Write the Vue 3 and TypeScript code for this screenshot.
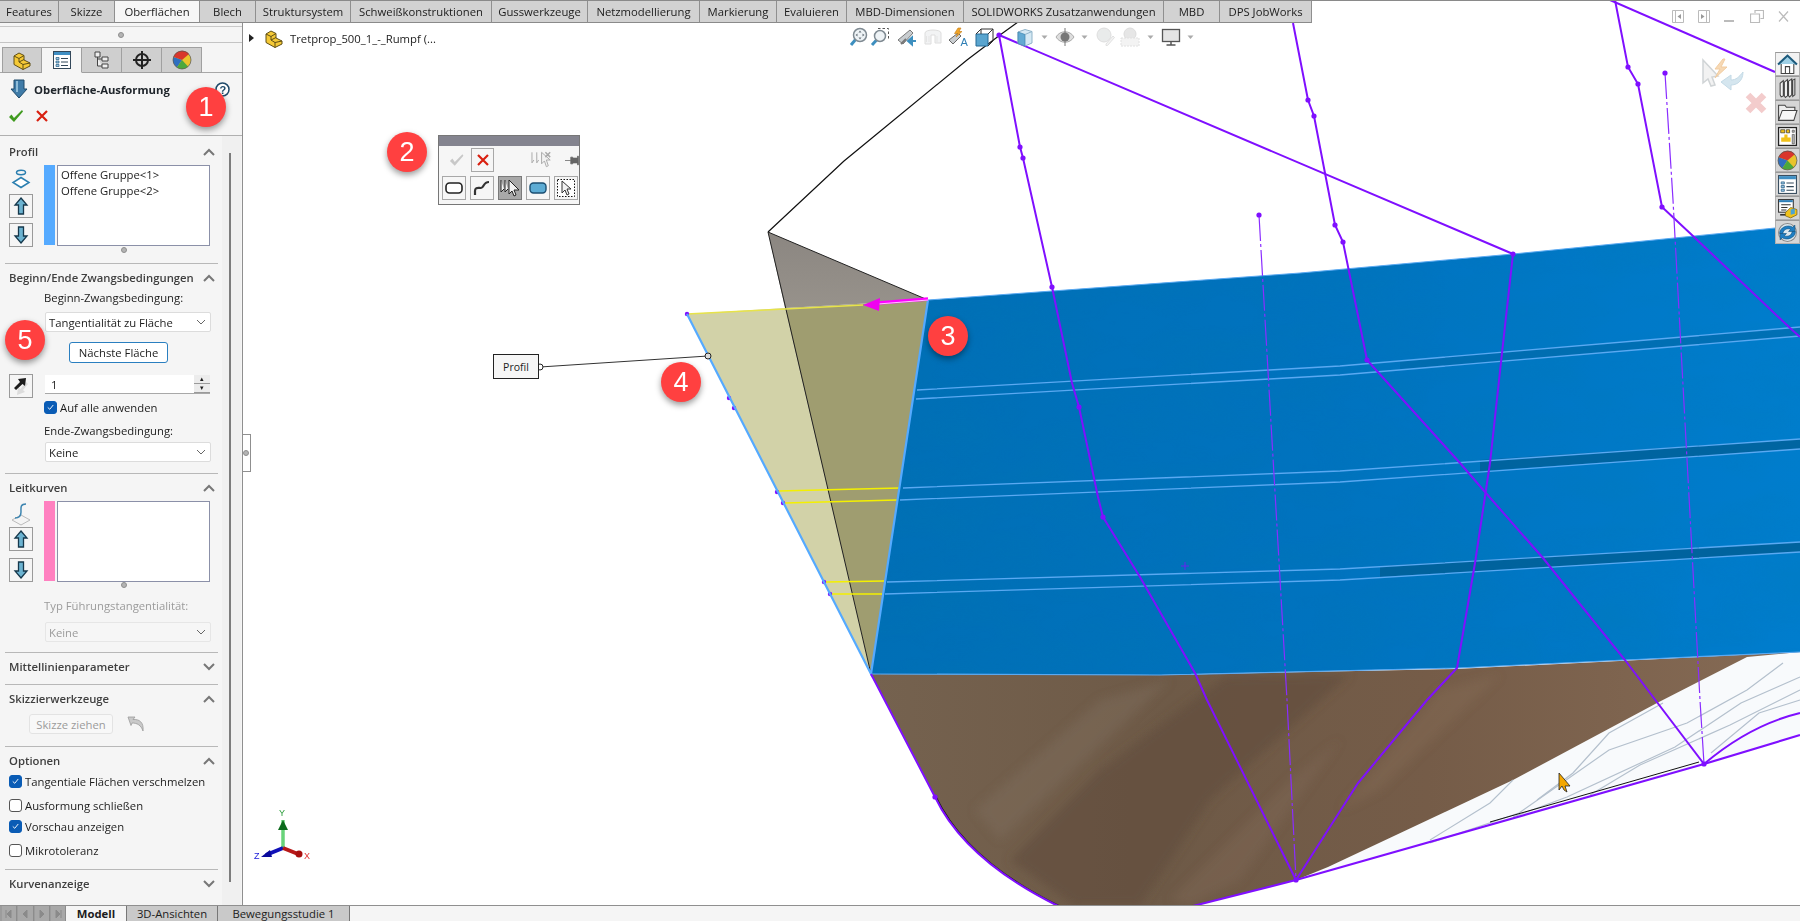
<script setup lang="ts">
interface RibbonTab {
  label: string
  width: number
  active?: boolean
}

// ribbon widths read off the screenshot
const ribbonTabs: RibbonTab[] = [
  { label: 'Features', width: 59 },
  { label: 'Skizze', width: 56 },
  { label: 'Oberflächen', width: 85, active: true },
  { label: 'Blech', width: 56 },
  { label: 'Struktursystem', width: 95 },
  { label: 'Schweißkonstruktionen', width: 141 },
  { label: 'Gusswerkzeuge', width: 96 },
  { label: 'Netzmodellierung', width: 112 },
  { label: 'Markierung', width: 77 },
  { label: 'Evaluieren', width: 70 },
  { label: 'MBD-Dimensionen', width: 117 },
  { label: 'SOLIDWORKS Zusatzanwendungen', width: 200 },
  { label: 'MBD', width: 56 },
  { label: 'DPS JobWorks', width: 92 },
]

const panelTabs = ['i-part', 'i-list', 'i-tree', 'i-cross', 'i-ball']

const markers = [
  { n: 1, x: 206, y: 107 },
  { n: 2, x: 407, y: 152 },
  { n: 3, x: 948, y: 336 },
  { n: 4, x: 681, y: 382 },
  { n: 5, x: 25, y: 340 },
]

// heads-up toolbar: icon centres in page px, turned into margins
const hudRaw = [
  { id: 'h-zoomfit', x: 858, w: 20 },
  { id: 'h-zoomarea', x: 880, w: 20 },
  { id: 'h-prev', x: 907, w: 20 },
  { id: 'h-sect', x: 933, w: 20 },
  { id: 'h-dyn', x: 958, w: 20 },
  { id: 'h-cube', x: 985, w: 20 },
  { id: 'h-shade', x: 1025, w: 20 },
  { id: 'h-drop', x: 1044, w: 7 },
  { id: 'h-eye', x: 1065, w: 20 },
  { id: 'h-drop', x: 1084, w: 7 },
  { id: 'h-ballpale', x: 1105, w: 20 },
  { id: 'h-scene', x: 1130, w: 20 },
  { id: 'h-drop', x: 1150, w: 7 },
  { id: 'h-monitor', x: 1171, w: 20 },
  { id: 'h-drop', x: 1190, w: 7 },
]
const hudItems = hudRaw.map((item, i) => {
  const prev = hudRaw[i - 1]
  const gap = prev ? item.x - item.w / 2 - (prev.x + prev.w / 2) : 0
  return { ...item, gap }
})

const taskPane = ['t-home', 't-books', 't-folder', 't-plan', 'i-ball', 'i-list', 't-view', 't-sync']

const navButtons = [
  'M7 2v8L3 6zM2 2v8',
  'M7 2v8L3 6z',
  'M3 2v8l4-4z',
  'M3 2v8l4-4zM8 2v8',
]

const bottomTabs = [
  { label: 'Modell', width: 61, active: true },
  { label: '3D-Ansichten', width: 91 },
  { label: 'Bewegungsstudie 1', width: 132 },
]

const optionRows = [
  { label: 'Tangentiale Flächen verschmelzen', checked: true, cls: 'opt-a' },
  { label: 'Ausformung schließen', checked: false, cls: 'opt-b' },
  { label: 'Vorschau anzeigen', checked: true, cls: 'opt-c' },
  { label: 'Mikrotoleranz', checked: false, cls: 'opt-d' },
]

const nodeDots: [number, number][] = [
  [1020, 147], [1023, 158], [1052, 287], [1079, 407], [1103, 517],
  [1308, 100], [1314, 116], [1335, 225], [1343, 242], [1367, 360],
  [1628, 67], [1638, 84], [1662, 207], [1513, 254], [1259, 215], [1665, 73],
  [999, 35], [935, 797], [1296, 880], [1704, 764],
]

// sit half hidden under the light blue edge
const edgeDots: [number, number][] = [
  [687, 314], [729, 398], [734, 408], [777, 492], [783, 503], [824, 582], [830, 594],
]

const surfaceLines = [
  'M917 390 1340 366 1800 327', 'M916 399 1340 375 1800 336',
  'M903 488 1340 471 1800 439', 'M900 500 1340 482 1800 449',
  'M887 582 1340 569 1800 542', 'M885 594 1340 580 1800 552',
]

const scrapeLines = [
  'M1783 663 1747 690 1687 723 1609 750 1519 813 1430 843',
  'M1800 677 1741 703 1675 747 1567 797 1513 817',
  'M1663 703 1609 733 1573 773 1537 800',
  'M1513 780 1490 803 1430 840',
  'M1800 700 1759 713 1711 753',
  'M1800 690 1730 725 1640 765 1590 795',
]
</script>

<template>
  <div class="App">
    <!-- shared icons -->
    <svg class="defs" width="0" height="0">
      <defs>
        <symbol id="i-part" viewBox="0 0 20 20">
          <path d="M2 6 7 3 12 5.5V10L18 13V16L11 19.5 2 14.5Z" fill="#f5c936" stroke="#5f4e14" />
          <path d="M2 6 7 8.5V12L11 14.5V19.5M7 8.5 12 5.5M7 12 12 9.5M11 14.5 18 13" fill="none" stroke="#5f4e14" />
        </symbol>
        <symbol id="i-list" viewBox="0 0 20 20">
          <rect x="1.5" y="1.5" width="17" height="17" fill="#fff" stroke="#33485a" />
          <rect x="2" y="2" width="16" height="3" fill="#3f8fc4" />
          <path d="M4 7.5h3v2H4zM4 11h3v2H4zM4 14.5h3v2H4z" fill="#9cc7e2" stroke="#245c84" stroke-width=".7" />
          <path d="M9 8.5h7M9 12h7M9 15.5h7" stroke="#33485a" />
        </symbol>
        <symbol id="i-tree" viewBox="0 0 20 20">
          <path d="M3 2h5v5H3zM10 7h6v4h-6zM10 14h6v4h-6zM5.5 7v9H10M5.5 9H10" fill="#eee" stroke="#444" />
        </symbol>
        <symbol id="i-cross" viewBox="0 0 20 20">
          <circle cx="10" cy="10" r="6" fill="none" stroke="#222" stroke-width="2" />
          <path d="M10 1v18M1 10h18" stroke="#222" stroke-width="2" />
        </symbol>
        <symbol id="i-ball" viewBox="0 0 20 20">
          <circle cx="10" cy="10" r="9" fill="#e9c32d" />
          <path d="M10 10 1.5 7A9 9 0 0 1 17 4Z" fill="#d9352b" />
          <path d="M10 10 1.5 7A9 9 0 0 0 5 17.5Z" fill="#2f6fc0" />
          <path d="M10 10 5 17.5A9 9 0 0 0 16 16.5Z" fill="#4ba83c" />
          <circle cx="10" cy="10" r="9" fill="none" stroke="#555" stroke-width=".7" />
        </symbol>
        <symbol id="i-up" viewBox="0 0 20 20">
          <path d="M10 2 16 9H12.5V18H7.5V9H4Z" fill="#6cb3d1" stroke="#16384c" stroke-width="1.3" />
        </symbol>
        <symbol id="i-down" viewBox="0 0 20 20">
          <path d="M10 18 16 11H12.5V2H7.5V11H4Z" fill="#6cb3d1" stroke="#16384c" stroke-width="1.3" />
        </symbol>
        <symbol id="chev-up" viewBox="0 0 12 8">
          <path d="M1 7 6 2 11 7" fill="none" stroke="#777" stroke-width="2" />
        </symbol>
        <symbol id="chev-down" viewBox="0 0 12 8">
          <path d="M1 1 6 6 11 1" fill="none" stroke="#777" stroke-width="2" />
        </symbol>
        <symbol id="caret" viewBox="0 0 10 6">
          <path d="M1 1 5 5 9 1" fill="none" stroke="#666" />
        </symbol>
        <symbol id="tick" viewBox="0 0 12 12">
          <path d="M3 6.5 5.2 8.5 9 3.8" fill="none" stroke="#fff" stroke-width="1" />
        </symbol>

        <symbol id="h-zoomfit" viewBox="0 0 20 20">
          <path d="M3 18 8 12" stroke="#3d8fbf" stroke-width="3" />
          <circle cx="12" cy="8" r="6.5" fill="#eef3f6" stroke="#7f8a92" stroke-width="1.5" />
          <path d="M12 3.5 10.5 5.5h3zM12 12.5 10.5 10.5h3zM7.5 8l2-1.5v3zM16.5 8l-2-1.5v3z" fill="#6a747c" />
        </symbol>
        <symbol id="h-zoomarea" viewBox="0 0 20 20">
          <path d="M2 18 7 12.5" stroke="#3d8fbf" stroke-width="3" />
          <circle cx="10" cy="9" r="5.5" fill="#eef3f6" stroke="#7f8a92" stroke-width="1.5" />
          <path d="M8 1.5h10.5V12" fill="none" stroke="#555" stroke-dasharray="2.5 2" />
        </symbol>
        <symbol id="h-prev" viewBox="0 0 20 20">
          <path d="M1 13 13 3l3 3-10 11z" fill="#c9cdd0" stroke="#777" />
          <path d="M4 17 9 12" stroke="#777" stroke-width="2" />
          <path d="M19 14h-8M11 14l4-3.5v7z" fill="#3d8fbf" stroke="#3d8fbf" stroke-width="2" />
        </symbol>
        <symbol id="h-sect" viewBox="0 0 20 20" opacity=".4">
          <path d="M2 6c0-4 16-4 16 0v10H12V8H8v9H2Z" fill="#dfe2e3" stroke="#aaa" />
          <path d="M3.5 9v6M6 9v6M14 9v6" stroke="#bbb" />
        </symbol>
        <symbol id="h-dyn" viewBox="0 0 20 20">
          <path d="M1 13 10 6l3 3-8 8z" fill="#c9cdd0" stroke="#666" />
          <path d="M10 1 6.5 6.5H10L8 10 14 4.5H11L13 1Z" fill="#f0a528" stroke="#c47a10" stroke-width=".6" />
          <text x="12.5" y="19" font-size="11" font-family="Liberation Sans" fill="#2f7fb5">A</text>
        </symbol>
        <symbol id="h-cube" viewBox="0 0 20 20">
          <path d="M1 7h12v12H1z" fill="#5aa5cf" stroke="#276a96" />
          <path d="M1 7 6 2h12v12l-5 5" fill="none" stroke="#333" />
          <path d="M13 7 18 2M6 2v5" stroke="#333" fill="none" />
        </symbol>
        <symbol id="h-shade" viewBox="0 0 20 20">
          <path d="M3 5 10 2.5 17 4.5V16L10 19 3 16.5Z" fill="#d5e9f4" stroke="#8fb3c9" />
          <path d="M3 5 10 7.5V19L3 16.5Z" fill="#63aad3" stroke="#3f84ae" stroke-width=".7" />
          <path d="M10 7.5 17 4.5" stroke="#8fb3c9" />
        </symbol>
        <symbol id="h-drop" viewBox="0 0 7 20">
          <path d="M.5 8.5h6L3.5 12Z" fill="#aaa" />
        </symbol>
        <symbol id="h-eye" viewBox="0 0 20 20">
          <path d="M1 10C5 3 15 3 19 10 15 17 5 17 1 10Z" fill="#ddd" stroke="#aaa" />
          <circle cx="10" cy="10" r="4.5" fill="#777" />
          <path d="M10 1v18" stroke="#777" />
        </symbol>
        <symbol id="h-ballpale" viewBox="0 0 20 20" opacity=".45">
          <circle cx="9" cy="8" r="7" fill="#cfd2d3" stroke="#b5b5b5" />
          <path d="M11 17 18 9l1.5 1.5-7 8H11Z" fill="#e5e5e5" stroke="#bbb" />
        </symbol>
        <symbol id="h-scene" viewBox="0 0 20 20" opacity=".45">
          <circle cx="10" cy="7" r="6" fill="#c8c8c8" stroke="#b0b0b0" />
          <path d="M1 11h18v8H1z" fill="#e5e5e5" stroke="#bbb" stroke-dasharray="2 1" />
        </symbol>
        <symbol id="h-monitor" viewBox="0 0 20 20">
          <rect x="1.5" y="2.5" width="17" height="12" fill="#e4e4e4" stroke="#555" stroke-width="1.3" />
          <path d="M10 14.5v3M5.5 18h9" stroke="#555" stroke-width="1.5" />
        </symbol>

        <symbol id="t-home" viewBox="0 0 20 20">
          <path d="M1 10 10 1.5 19 10" fill="#9fd0e6" stroke="#1c5a7c" stroke-width="2" />
          <path d="M4 9.5V18.5H16V9.5" fill="#fff" stroke="#444" />
          <path d="M8 18.5V12h4v6.5" fill="none" stroke="#444" />
        </symbol>
        <symbol id="t-books" viewBox="0 0 20 20">
          <path d="M3 5 6 2.5V17L4 18 3 16ZM7 4 10 1.5V17L8 18.5 7 17ZM11 3 14 1V16L12 18 11 17ZM15 2 17 1V16L15 17.5Z" fill="#f2f2f2" stroke="#444" />
        </symbol>
        <symbol id="t-folder" viewBox="0 0 20 20">
          <path d="M1.5 17.5V3h6l1.5 2h8v3" fill="#eee" stroke="#444" />
          <path d="M1.5 17.5 5 8h14l-3 9.5Z" fill="#f7f7f7" stroke="#444" />
        </symbol>
        <symbol id="t-plan" viewBox="0 0 20 20">
          <rect x="1.5" y="1.5" width="17" height="17" fill="#fff" stroke="#222" stroke-width="1.2" />
          <path d="M3.5 3.5h4v3h-4zM9 3.5h3v3H9z" fill="#f1c21b" stroke="#222" stroke-width=".6" />
          <path d="M7 8h3v3h3v4H4v-4h3z" fill="#f1c21b" />
          <path d="M14.5 4h2v2h-2zM14.5 8h2v9h-2z" fill="#bbb" stroke="#444" stroke-width=".6" />
        </symbol>
        <symbol id="t-view" viewBox="0 0 20 20">
          <rect x="1.5" y="1.5" width="14" height="12" fill="#fff" stroke="#333" />
          <path d="M2 2h13v2H2z" fill="#2e7fb8" />
          <path d="M4 6.5h9M4 9h6M4 11.5h5" stroke="#333" />
          <path d="M3 16h7" stroke="#333" stroke-width="1.5" />
          <path d="M8 14 13 9 19 11V16L13 19 8 17Z" fill="#f1c21b" stroke="#7a5f10" stroke-width=".7" />
          <path d="M13 11 17 10V15L13 16Z" fill="#4aa3d4" />
        </symbol>
        <symbol id="t-sync" viewBox="0 0 20 20">
          <circle cx="10" cy="10" r="8.5" fill="#dbe8ef" stroke="#888" />
          <path d="M2.5 11C2.5 5 10 2 15 5L17 3V9H11L13 7C10 5.5 6 7 5.5 11Z" fill="#1f7fc4" stroke="#0e4f7c" stroke-width=".6" />
          <path d="M17.5 9C17.5 15 10 18 5 15L3 17V11H9L7 13C10 14.5 14 13 14.5 9Z" fill="#1f7fc4" stroke="#0e4f7c" stroke-width=".6" />
        </symbol>

        <linearGradient id="blueFill" x1="0" x2="1" y1="0" y2="0">
          <stop offset="0" stop-color="#006fb6" />
          <stop offset=".5" stop-color="#0073bf" />
          <stop offset="1" stop-color="#007dcd" />
        </linearGradient>
        <linearGradient id="brownFill" x1="0" x2="1" y1="0" y2="0">
          <stop offset="0" stop-color="#75624f" />
          <stop offset=".32" stop-color="#6e5a47" />
          <stop offset=".6" stop-color="#755c48" />
          <stop offset="1" stop-color="#866b55" />
        </linearGradient>
        <linearGradient id="greyFill" x1="0" x2="0" y1="0" y2="1">
          <stop offset="0" stop-color="#8b8681" />
          <stop offset="1" stop-color="#97928b" />
        </linearGradient>
        <filter id="soft" x="-20%" y="-20%" width="140%" height="140%">
          <feGaussianBlur stdDeviation="5" />
        </filter>
        <filter id="mottle" x="0" y="0" width="100%" height="100%">
          <feTurbulence type="fractalNoise" baseFrequency=".012 .03" numOctaves="3" seed="4" />
          <feColorMatrix values="0 0 0 0 0  0 0 0 0 .2  0 0 0 0 .4  .6 0 0 0 -.2" />
        </filter>
        <clipPath id="blueClip">
          <path d="M928 300 1300 273 1513 254 1775 228 1800 226V652L1625 660 1457 668 1160 675 871 674Z" />
        </clipPath>
      </defs>
    </svg>

    <!-- 3D scene, in page coordinates -->
    <svg class="Scene" viewBox="0 0 1800 921" width="1800" height="921">
      <path d="M871 674 1160 675 1456 669 1800 652V735L1704 764 1296 880 1193 906V921H1058V906Q965 860 935 797Z" fill="url(#brownFill)" />
      <g filter="url(#soft)">
        <path d="M1226 676 1350 674 1210 800 1140 906 1075 906 1010 860 1100 770Z" fill="#614c3a" opacity=".6" />
        <path d="M1100 700 1170 680 1000 840 975 810Z" fill="#857361" opacity=".35" />
        <path d="M1290 780 1340 740 1240 880 1190 906 1170 900Z" fill="#80695a" opacity=".35" />
        <path d="M1440 690 1500 675 1380 790 1340 810Z" fill="#8a7059" opacity=".3" />
      </g>
      <path d="M1747 657 1800 652V735L1704 764 1296 880 1328 867 1513 780 1657 703Z" fill="#f8fafc" />
      <path v-for="d in scrapeLines" :key="d" :d="d" fill="none" stroke="#b4c0cd" stroke-width="1.2" />

      <path d="M768 232 928 300 785 308Z" fill="url(#greyFill)" />
      <path d="M687 314 785 308 871 674Z" fill="#d2d2a8" />
      <path d="M785 308 928 300 871 674Z" fill="#9f9d70" />
      <path d="M871 674 768 232 928 300" fill="none" stroke="#222" stroke-width="1" />
      <path d="M768 232 844 161 872 138 967 60 1000 35 1018 22" fill="none" stroke="#111" stroke-width="1.2" />

      <path d="M928 300 1300 273 1513 254 1775 228 1800 226V652L1625 660 1457 668 1160 675 871 674Z" fill="url(#blueFill)" />
      <g clip-path="url(#blueClip)">
        <rect x="860" y="220" width="940" height="460" filter="url(#mottle)" opacity=".5" />
      </g>
      <path d="M1400 361 1800 327V336L1400 370Z" fill="#00639f" opacity=".5" />
      <path d="M1480 460 1800 439V449L1480 471Z" fill="#005f96" opacity=".8" />
      <path d="M1380 566 1800 542V552L1380 577Z" fill="#005f96" opacity=".85" />
      <path v-for="d in surfaceLines" :key="d" :d="d" fill="none" stroke="#5aa9f2" stroke-width="1.3" />
      <path d="M928 300 1300 273 1513 254 1775 228 1800 226" fill="none" stroke="#5aa9f2" stroke-width="1" />
      <path d="M871 674 1160 675 1457 668 1625 660 1800 652" fill="none" stroke="#5aa9f2" stroke-width="1.2" />

      <!-- yellow section lines -->
      <g stroke="#f4f000" stroke-width="1.3">
        <path d="M687 314 863 305" stroke="#e7e34a" />
        <path d="M778 491 900 488M785 503 897 500M826 582 884 581M832 594 882 594" />
      </g>
      <circle v-for="p in edgeDots" :key="p.join()" :cx="p[0]" :cy="p[1]" r="2.2" fill="#7f0fff" />
      <path d="M687 314 871 674 928 300" fill="none" stroke="#55aaff" stroke-width="2.2" />

      <!-- magenta tangent arrow -->
      <path d="M928 299 878 303" stroke="#ff00ff" stroke-width="3.5" />
      <path d="M928 300 878 304" stroke="#ffc4ff" stroke-width="1" />
      <path d="M863 305 880 298 879 311Z" fill="#f000f0" />

      <!-- purple construction lines -->
      <path d="M935 797Q965 860 1058 906" fill="none" stroke="#111" stroke-width="1.5" transform="translate(1 0)" />
      <g fill="none" stroke="#7f0fff" stroke-width="2">
        <path d="M999 35 1020 147 1023 158 1052 287 1072 383 1079 407 1098 497 1103 517 1140 577 1195 673 1207 700 1296 880" />
        <path d="M999 35 1513 254 1502 353 1490 463 1475 563 1457 668 1427 700 1358 783 1296 880" />
        <path d="M1293 23 1308 100 1314 116 1335 225 1343 242 1367 360 1460 463 1485 492 1543 558 1625 660 1704 764" />
        <path d="M1615 0 1628 67 1638 84 1662 207 1693 236 1790 328 1800 337" />
        <path d="M1610 0 1775 72" />
        <path d="M871 674 935 797Q965 860 1058 906" />
        <path d="M1193 906 1296 880 1704 764 1800 735" stroke-width="2.2" />
        <path d="M1704 764Q1750 725 1800 713" />
      </g>
      <path d="M1490 823 1699 763" stroke="#111" stroke-width="1" transform="translate(0 -1)" />
      <g fill="none" stroke="#8a2dff" stroke-width="1.2" stroke-dasharray="26 3 3 3">
        <path d="M1259 215 1287 700 1296 880" />
        <path d="M1665 73 1673 200 1700 700 1704 764" />
      </g>
      <circle v-for="p in nodeDots" :key="p.join()" :cx="p[0]" :cy="p[1]" r="2.6" fill="#7f0fff" />
      <path d="M1181 566h8M1185 562v8" stroke="#7f0fff" stroke-width=".8" />

      <!-- callout leader -->
      <path d="M540 367 708 356" stroke="#333" stroke-width="1" />
      <circle cx="540" cy="367" r="3" fill="#fff" stroke="#222" />
      <circle cx="708" cy="356" r="3" fill="#ddd" stroke="#222" />

      <!-- triad -->
      <path d="M283 848V820" stroke="#69d37a" stroke-width="3.5" />
      <path d="M283 820 278 830H288Z" fill="#0c6a1c" />
      <path d="M283 848 266 855" stroke="#1010b8" stroke-width="4" />
      <path d="M261 857 270 850 272 857Z" fill="#0a0a9c" />
      <path d="M283 848 298 854" stroke="#b81818" stroke-width="4" />
      <circle cx="299" cy="854" r="3.5" fill="#a81010" />
      <text x="279" y="816" class="axis" fill="#2a9d3a">Y</text>
      <text x="254" y="859" class="axis" fill="#1a1ad8">Z</text>
      <text x="304" y="859" class="axis" fill="#e03030">X</text>

      <!-- mouse pointer -->
      <path d="M1559 773 1570 786 1565 786 1567 792 1564 790 1562 786 1559 790Z" fill="#f5a800" stroke="#222" stroke-width=".8" />
    </svg>

    <div class="Ribbon">
      <div
        v-for="tab in ribbonTabs"
        :key="tab.label"
        class="Ribbon__tab"
        :class="{ 'Ribbon__tab--active': tab.active }"
        :style="{ width: tab.width + 'px' }"
      >{{ tab.label }}</div>
    </div>

    <div class="Middle">
      <aside class="Panel">
        <div class="Panel__grip"><span class="dot"></span></div>

        <div class="Panel__tabs">
          <div
            v-for="(id, i) in panelTabs"
            :key="id"
            class="Panel__tab"
            :class="{ 'Panel__tab--active': i === 1 }"
          >
            <svg width="20" height="20"><use :href="'#' + id" /></svg>
          </div>
        </div>

        <div class="Panel__title">
          <div class="Panel__titleRow">
            <svg width="18" height="20" viewBox="0 0 18 20">
              <path d="M4 1h10v9h3l-8 9-8-9h3Z" fill="#3f7ba8" stroke="#1f4a6a" />
              <path d="M7 2v11" stroke="#8fbcd8" stroke-width="2" />
            </svg>
            <b>Oberfläche-Ausformung</b>
            <svg class="help" width="15" height="15" viewBox="0 0 15 15">
              <circle cx="7.5" cy="7.5" r="6.5" fill="#fff" stroke="#1f4a6a" stroke-width="1.5" />
              <text x="4.6" y="11.5" font-size="11" font-weight="700" font-family="Liberation Sans" fill="#1f4a6a">?</text>
            </svg>
          </div>
          <div class="Panel__actions">
            <svg width="16" height="14" viewBox="0 0 16 14"><path d="M1 8 3.5 5.5 6 9 14 1 15 2.5 6 13Z" fill="#3f9a1e" /></svg>
            <svg width="14" height="14" viewBox="0 0 14 14"><path d="M2 2 12 12M12 2 2 12" stroke="#d92010" stroke-width="2.2" /></svg>
          </div>
        </div>

        <div class="Panel__body">
          <div class="Panel__sections">
            <section class="Group Group--first">
              <header class="Group__head">
                <span>Profil</span>
                <svg width="12" height="8"><use href="#chev-up" /></svg>
              </header>
              <div class="ListRow">
                <div class="ListRow__tools">
                  <svg class="ListRow__icon" width="24" height="24" viewBox="0 0 24 24">
                    <ellipse cx="12" cy="5" rx="4.5" ry="2.2" fill="none" stroke="#2b7fb0" stroke-width="1.5" />
                    <path d="M12 10 20 15 12 20 4 15Z" fill="#fff" stroke="#2b7fb0" stroke-width="1.5" />
                  </svg>
                  <button class="IconBtn"><svg width="20" height="20"><use href="#i-up" /></svg></button>
                  <button class="IconBtn IconBtn--gap5"><svg width="20" height="20"><use href="#i-down" /></svg></button>
                </div>
                <div class="ListRow__stripe ListRow__stripe--blue"></div>
                <div class="ListRow__box">
                  <div>Offene Gruppe&lt;1&gt;</div>
                  <div>Offene Gruppe&lt;2&gt;</div>
                </div>
              </div>
              <div class="ListRow__grip"><span class="dot"></span></div>
            </section>

            <section class="Group Group--begin">
              <header class="Group__head">
                <span>Beginn/Ende Zwangsbedingungen</span>
                <svg width="12" height="8"><use href="#chev-up" /></svg>
              </header>
              <div class="Field__label">Beginn-Zwangsbedingung:</div>
              <div class="Select Select--gap7">
                <span>Tangentialität zu Fläche</span>
                <svg width="10" height="6"><use href="#caret" /></svg>
              </div>
              <button class="NextFace">Nächste Fläche</button>
              <div class="SpinRow">
                <button class="IconBtn">
                  <svg width="20" height="20" viewBox="0 0 20 20">
                    <path d="M17 8 12 14 14 16 6 19 7 11 9.5 13 15 6Z" fill="#dcdcdc" />
                    <path d="M3 12 9 6 7 3 15 2 14 10 11.5 8 5 14Z" fill="#1c1c1c" />
                  </svg>
                </button>
                <div class="Spin">
                  <span>1</span>
                  <div class="Spin__btns"><i>▴</i><i>▾</i></div>
                </div>
              </div>
              <label class="Check Check--apply">
                <span class="Check__box Check__box--on"><svg width="12" height="12"><use href="#tick" /></svg></span>
                Auf alle anwenden
              </label>
              <div class="Field__label Field__label--end">Ende-Zwangsbedingung:</div>
              <div class="Select Select--gap4">
                <span>Keine</span>
                <svg width="10" height="6"><use href="#caret" /></svg>
              </div>
            </section>

            <section class="Group Group--guide">
              <header class="Group__head">
                <span>Leitkurven</span>
                <svg width="12" height="8"><use href="#chev-up" /></svg>
              </header>
              <div class="ListRow">
                <div class="ListRow__tools">
                  <svg class="ListRow__icon ListRow__icon--guide" width="24" height="24" viewBox="0 0 24 24">
                    <path d="M12 13 21 18 12 23 3 18Z" fill="#f4f4f4" stroke="#bbb" />
                    <path d="M17 2C11 2 12 6 12 10S10 16 6 16" fill="none" stroke="#3d85b0" stroke-width="1.5" />
                  </svg>
                  <button class="IconBtn"><svg width="20" height="20"><use href="#i-up" /></svg></button>
                  <button class="IconBtn IconBtn--gap7"><svg width="20" height="20"><use href="#i-down" /></svg></button>
                </div>
                <div class="ListRow__stripe ListRow__stripe--pink"></div>
                <div class="ListRow__box"></div>
              </div>
              <div class="ListRow__grip"><span class="dot"></span></div>
              <div class="Field__label Field__label--off">Typ Führungstangentialität:</div>
              <div class="Select Select--off Select--gap9">
                <span>Keine</span>
                <svg width="10" height="6"><use href="#caret" /></svg>
              </div>
            </section>

            <section class="Group Group--closed">
              <header class="Group__head">
                <span>Mittellinienparameter</span>
                <svg width="12" height="8"><use href="#chev-down" /></svg>
              </header>
            </section>

            <section class="Group Group--sketch">
              <header class="Group__head">
                <span>Skizzierwerkzeuge</span>
                <svg width="12" height="8"><use href="#chev-up" /></svg>
              </header>
              <div class="SketchRow">
                <button class="SketchBtn">Skizze ziehen</button>
                <svg width="18" height="16" viewBox="0 0 18 16">
                  <path d="M1 1 8 1 6 3.5C12 3 17 6 16 15 14 9 10 7 5 7L4 9.5Z" fill="#c9c9c9" stroke="#9a9a9a" stroke-width=".8" />
                </svg>
              </div>
            </section>

            <section class="Group Group--options">
              <header class="Group__head">
                <span>Optionen</span>
                <svg width="12" height="8"><use href="#chev-up" /></svg>
              </header>
              <label v-for="row in optionRows" :key="row.label" class="Check" :class="row.cls">
                <span class="Check__box" :class="{ 'Check__box--on': row.checked }">
                  <svg v-if="row.checked" width="12" height="12"><use href="#tick" /></svg>
                </span>
                {{ row.label }}
              </label>
            </section>

            <section class="Group Group--last">
              <header class="Group__head">
                <span>Kurvenanzeige</span>
                <svg width="12" height="8"><use href="#chev-down" /></svg>
              </header>
            </section>
          </div>

          <div class="Panel__track"><div class="Panel__thumb"></div></div>
        </div>
      </aside>
    </div>

    <footer class="Bottom">
      <div class="Bottom__nav">
        <span v-for="d in navButtons" :key="d" class="Bottom__navBtn">
          <svg width="10" height="12" viewBox="0 0 10 12"><path :d="d" fill="#8a8a8a" stroke="#8a8a8a" /></svg>
        </span>
      </div>
      <div
        v-for="tab in bottomTabs"
        :key="tab.label"
        class="Bottom__tab"
        :class="{ 'Bottom__tab--active': tab.active }"
        :style="{ width: tab.width + 'px' }"
      >{{ tab.label }}</div>
    </footer>

    <!-- things lying over the viewport -->
    <div class="Handle"><span class="dot"></span></div>

    <div class="Flyout">
      <svg width="7" height="8" viewBox="0 0 7 8"><path d="M1 0 6 4 1 8Z" fill="#222" /></svg>
      <svg class="Flyout__part" width="20" height="20"><use href="#i-part" /></svg>
      <span>Tretprop_500_1_-_Rumpf (...</span>
    </div>

    <div class="Hud">
      <svg
        v-for="(item, i) in hudItems"
        :key="i"
        :width="item.w"
        height="20"
        :style="{ marginLeft: item.gap + 'px' }"
      ><use :href="'#' + item.id" /></svg>
    </div>

    <div class="WinCtrl">
      <svg width="12" height="13" viewBox="0 0 12 13"><path d="M.5.5h11v12H.5zM3.5.5v12" fill="#fff" stroke="#bbb" /><path d="M9 4 5.5 6.5 9 9Z" fill="#999" /></svg>
      <svg width="12" height="13" viewBox="0 0 12 13"><path d="M.5.5h11v12H.5zM8.5.5v12" fill="#fff" stroke="#bbb" /><path d="M3 4 6.5 6.5 3 9Z" fill="#999" /></svg>
      <svg width="12" height="13" viewBox="0 0 12 13"><path d="M0 11h10" stroke="#bbb" stroke-width="2" /></svg>
      <svg width="14" height="13" viewBox="0 0 14 13"><path d="M5 3V.5h8.5v8H10.500M.5 4h9v8.5h-9z" fill="none" stroke="#bbb" stroke-width="1.2" /></svg>
      <svg width="11" height="13" viewBox="0 0 11 13"><path d="M1 1.5 10 11.5M10 1.5 1 11.5" stroke="#bbb" stroke-width="1.2" /></svg>
    </div>

    <div class="Ghost">
      <svg width="42" height="38" viewBox="0 0 42 38">
        <path d="M1 2 16 18 10 19 13 27 9 28 6 21 1 25Z" fill="#f2f2f2" stroke="#d0d4d6" stroke-width="1.5" />
        <path d="M21 1 13 11h5L13 20 25 9h-6l4-8Z" fill="#f7d9b5" stroke="#f1cca0" />
        <path d="M41 14C41 24 34 27 29 27V32L19 24 29 17V22C34 22 37 19 41 14Z" fill="#d5e6ef" stroke="#c4dae6" />
      </svg>
      <svg class="Ghost__x" width="24" height="24" viewBox="0 0 24 24"><path d="M4 4 20 20M20 4 4 20" stroke="#f3cccc" stroke-width="6.5" /></svg>
    </div>

    <div class="TaskPane">
      <div
        v-for="(id, i) in taskPane"
        :key="id"
        class="TaskPane__btn"
        :class="{ 'TaskPane__btn--active': i === 0 }"
      >
        <svg width="21" height="21"><use :href="'#' + id" /></svg>
      </div>
    </div>

    <div class="Popup">
      <div class="Popup__bar"></div>
      <div class="Popup__row Popup__row--top">
        <svg class="Popup__check" width="16" height="14" viewBox="0 0 16 14"><path d="M1 8 3.5 5.5 6 9 14 1 15 2.5 6 13Z" fill="#c8c8c8" /></svg>
        <span class="Popup__btn"><svg width="14" height="14" viewBox="0 0 14 14"><path d="M2 2 12 12M12 2 2 12" stroke="#d92010" stroke-width="2.2" /></svg></span>
        <svg class="Popup__ghost" width="22" height="18" viewBox="0 0 22 18">
          <path d="M1 1V12L3 9M6 1V12L8 9M11 1 11 13 14 10 16 16 18 15 16 9 20 9Z" fill="#f2f2f2" stroke="#a9a9a9" />
          <path d="M15 1 20 6M20 1 15 6" stroke="#a9a9a9" stroke-width="1.5" />
        </svg>
        <svg class="Popup__pin" width="15" height="11" viewBox="0 0 15 11"><path d="M0 5.5h6M6 2h2v1h5V1h1v9h-1V8H8v1H6Z" fill="#666" stroke="#666" stroke-width=".8" /></svg>
      </div>
      <div class="Popup__row">
        <span class="Popup__btn"><svg width="18" height="14" viewBox="0 0 18 14"><rect x="1" y="2" width="16" height="10" rx="3.5" fill="#fff" stroke="#222" stroke-width="1.6" /></svg></span>
        <span class="Popup__btn"><svg width="18" height="16" viewBox="0 0 18 16"><path d="M2 15V11C2 7 5 8 8 8S10 2 16 2" fill="none" stroke="#333" stroke-width="2.2" /></svg></span>
        <span class="Popup__btn Popup__btn--on"><svg width="20" height="18" viewBox="0 0 20 18"><path d="M1 1V13L4 10M5 1V13L8 10M9 1V15L12 12 14 17 16 16 14 11 19 11Z" fill="#f2f2f2" stroke="#222" /></svg></span>
        <span class="Popup__btn"><svg width="18" height="14" viewBox="0 0 18 14"><rect x="1" y="2" width="16" height="10" rx="3.5" fill="#5dacd4" stroke="#1c4f72" stroke-width="1.4" /></svg></span>
        <span class="Popup__btn Popup__btn--last"><svg width="18" height="18" viewBox="0 0 18 18"><path d="M.5.5h17v17H.5z" fill="#fff" stroke="#111" stroke-dasharray="1.5 1.5" /><path d="M5 2V14L8 11 10 16 12 15 10 10 14 10Z" fill="#f2f2f2" stroke="#333" /></svg></span>
      </div>
    </div>

    <div class="Callout">Profil</div>

    <div
      v-for="m in markers"
      :key="m.n"
      class="Marker"
      :style="{ left: m.x - 20 + 'px', top: m.y - 20 + 'px' }"
    >{{ m.n }}</div>
  </div>
</template>

<style>
html, body {
  margin: 0;
  background: #fff;
}
</style>

<style scoped>
.App {
  position: relative;
  display: flex;
  flex-direction: column;
  width: 1800px;
  height: 921px;
  overflow: hidden;
  background: #fff;
  font-family: "Open Sans", "Noto Sans", sans-serif;
  font-size: 11.3px;
  color: #1c1c1c;
}

.defs {
  position: absolute;
}

.Scene {
  position: absolute;
  left: 0;
  top: 0;
}

.axis {
  font-family: "Liberation Sans", sans-serif;
  font-size: 9px;
}

/* Ribbon */

.Ribbon {
  position: relative;
  display: flex;
  flex: none;
  height: 23px;
  box-sizing: border-box;
  border-top: 1px solid #8a8a8a;
}

.Ribbon__tab {
  display: flex;
  flex: none;
  align-items: center;
  justify-content: center;
  box-sizing: border-box;
  height: 22px;
  background: #d2d2d2;
  border-right: 1px solid #8f8f8f;
  border-bottom: 1px solid #8a8a8a;
  white-space: nowrap;
}

.Ribbon__tab--active {
  background: #f6f6f6;
}

.Middle {
  position: relative;
  display: flex;
  flex: 1;
  min-height: 0;
}

/* Left panel */

.Panel {
  display: flex;
  flex-direction: column;
  width: 243px;
  box-sizing: border-box;
  background: #f5f5f5;
  border-right: 1px solid #8f8f8f;
}

.Panel__grip {
  display: flex;
  flex: none;
  align-items: center;
  justify-content: center;
  box-sizing: border-box;
  height: 20px;
  padding-top: 4px;
  border-bottom: 1px solid #c4c4c4;
  background: linear-gradient(#f5f5f5 3px, #c9c9c9 3px, #c9c9c9 4px, #f5f5f5 4px);
}

.dot {
  display: block;
  width: 6px;
  height: 6px;
  box-sizing: border-box;
  border-radius: 50%;
  background: #b4b4b4;
  border: 1px solid #8e8e8e;
}

.Panel__tabs {
  display: flex;
  flex: none;
  height: 30px;
  box-sizing: border-box;
  padding: 4px 0 0 2px;
  border-bottom: 1px solid #a8a8a8;
}

.Panel__tab {
  display: flex;
  align-items: center;
  justify-content: center;
  box-sizing: border-box;
  width: 40px;
  height: 26px;
  background: #cfcfcf;
  border: 1px solid #a0a0a0;
  border-left: 0;
}

.Panel__tab:first-child {
  border-left: 1px solid #a0a0a0;
}

.Panel__tab--active {
  background: #f5f5f5;
  border-bottom-color: #f5f5f5;
}

.Panel__title {
  flex: none;
  height: 63px;
  box-sizing: border-box;
  padding: 6px 0 0 10px;
  border-bottom: 1px solid #b0b0b0;
}

.Panel__titleRow {
  display: flex;
  align-items: center;
}

.Panel__titleRow b {
  margin-left: 6px;
  color: #20262c;
}

.help {
  margin-left: 45px;
}

.Panel__actions {
  display: flex;
  align-items: center;
  gap: 11px;
  margin: 10px 0 0 -2px;
}

.Panel__body {
  display: flex;
  flex: 1;
  min-height: 0;
}

.Panel__sections {
  width: 213px;
  margin-left: 5px;
}

.Panel__track {
  flex: none;
  width: 19px;
  margin-left: 4px;
  padding: 17px 0 0 7px;
  box-sizing: border-box;
  background: #f0f0f0;
}

.Panel__thumb {
  width: 2px;
  height: 729px;
  background: #7c7c7c;
}

/* PropertyManager groups */

.Group {
  box-sizing: border-box;
  padding-left: 4px;
  border-bottom: 1px solid #b8b8b8;
}

.Group--first { height: 128px; padding-top: 2px; }
.Group--begin { height: 210px; }
.Group--guide { height: 179px; }
.Group--closed { height: 32px; }
.Group--sketch { height: 62px; }
.Group--options { height: 123px; }
.Group--last { height: 32px; border-bottom: 0; }

.Group__head {
  display: flex;
  align-items: center;
  justify-content: space-between;
  height: 27px;
  padding: 0 3px 0 0;
  font-weight: 600;
  color: #3f3f3f;
}

.ListRow {
  display: flex;
  align-items: flex-start;
}

.ListRow__tools {
  display: flex;
  flex-direction: column;
  width: 24px;
  margin-right: 11px;
}

.ListRow__icon {
  height: 29px;
}

.ListRow__icon--guide {
  height: 26px;
}

.ListRow__stripe {
  width: 11px;
  height: 80px;
  margin-right: 2px;
}

.ListRow__stripe--blue { background: #55aaff; }
.ListRow__stripe--pink { background: #ff80c0; }

.ListRow__box {
  box-sizing: border-box;
  width: 153px;
  height: 81px;
  padding: 1px 3px;
  background: #fff;
  border: 1px solid #8b90a8;
  line-height: 16px;
}

.ListRow__grip {
  display: flex;
  justify-content: center;
  margin-left: 20px;
}

.IconBtn {
  display: flex;
  align-items: center;
  justify-content: center;
  box-sizing: border-box;
  width: 24px;
  height: 24px;
  padding: 0;
  background: #f5f5f5;
  border: 1px solid #9a9a9a;
}

.IconBtn--gap5 { margin-top: 5px; }
.IconBtn--gap7 { margin-top: 7px; }

.Field__label {
  height: 14px;
  margin-left: 35px;
  line-height: 14px;
}

.Field__label--end { margin-top: 10px; }
.Field__label--off { margin-top: 11px; color: #9b9b9b; }

.Select {
  display: flex;
  align-items: center;
  justify-content: space-between;
  box-sizing: border-box;
  width: 166px;
  height: 20px;
  margin-left: 36px;
  padding: 0 4px 0 3px;
  background: #fff;
  border: 1px solid #dcdcdc;
  border-radius: 2px;
}

.Select--gap7 { margin-top: 7px; }
.Select--gap4 { margin-top: 4px; }
.Select--gap9 { margin-top: 9px; }

.Select--off {
  background: #f6f6f6;
  border-color: #e6e6e6;
  color: #9b9b9b;
}

.NextFace {
  display: block;
  box-sizing: border-box;
  width: 99px;
  height: 21px;
  margin: 10px 0 0 60px;
  padding: 0;
  background: #fff;
  border: 1px solid #2a7fc0;
  border-radius: 3px;
  font: inherit;
  color: inherit;
}

.SpinRow {
  display: flex;
  align-items: flex-start;
  margin-top: 11px;
}

.Spin {
  display: flex;
  align-items: center;
  justify-content: space-between;
  box-sizing: border-box;
  width: 165px;
  height: 19px;
  margin: 1px 0 0 12px;
  padding-left: 6px;
  background: #fff;
  border-bottom: 1px solid #a8a8a8;
}

.Spin__btns {
  display: flex;
  flex-direction: column;
  width: 16px;
  height: 18px;
  background: #d8d8d8;
  border-left: 1px solid #fff;
}

.Spin__btns i {
  display: block;
  height: 9px;
  font-size: 7px;
  font-style: normal;
  line-height: 8px;
  text-align: center;
  border-bottom: 1px solid #9a9a9a;
  background: #ececec;
}

.Check {
  display: flex;
  align-items: center;
  gap: 3px;
  height: 14px;
}

.Check__box {
  display: flex;
  flex: none;
  align-items: center;
  justify-content: center;
  box-sizing: border-box;
  width: 13px;
  height: 13px;
  background: #fff;
  border: 1px solid #555;
  border-radius: 3px;
}

.Check__box--on {
  background: #0a5cb5;
  border-color: #0a5cb5;
}

.Check--apply {
  margin: 2px 0 0 35px;
}

.opt-b { margin-top: 10px; }
.opt-c { margin-top: 7px; }
.opt-d { margin-top: 10px; }

.SketchRow {
  display: flex;
  align-items: center;
  gap: 14px;
  margin: 2px 0 0 20px;
}

.SketchBtn {
  box-sizing: border-box;
  width: 84px;
  height: 20px;
  padding: 0;
  background: #f8f8f8;
  border: 1px solid #e3e3e3;
  border-radius: 3px;
  font: inherit;
  color: #9b9b9b;
}

/* Bottom bar */

.Bottom {
  position: relative;
  display: flex;
  flex: none;
  height: 16px;
  box-sizing: border-box;
  background: #f5f5f5;
  border-top: 1px solid #8f8f8f;
}

.Bottom__nav {
  display: flex;
  flex: none;
  gap: 1px;
  box-sizing: border-box;
  width: 66px;
  padding-left: 2px;
  background: #9c9c9c;
}

.Bottom__navBtn {
  display: flex;
  flex: 1;
  align-items: center;
  justify-content: center;
  background: #a8a8a8;
  border-right: 1px solid #8c8c8c;
}

.Bottom__tab {
  display: flex;
  flex: none;
  align-items: center;
  justify-content: center;
  box-sizing: border-box;
  background: #c9c9c9;
  border-right: 1px solid #777;
  white-space: nowrap;
}

.Bottom__tab--active {
  background: #f5f5f5;
  font-weight: 700;
}

/* Overlays on the viewport */

.Handle {
  position: absolute;
  left: 243px;
  top: 434px;
  display: flex;
  align-items: center;
  box-sizing: border-box;
  width: 8px;
  height: 38px;
  background: #fff;
  border: 1px solid #8f8f8f;
  border-left: 0;
}

.Flyout {
  position: absolute;
  left: 248px;
  top: 28px;
  display: flex;
  align-items: center;
  height: 20px;
}

.Flyout__part {
  margin: 0 6px 0 9px;
}

.Hud {
  position: absolute;
  left: 848px;
  top: 27px;
  display: flex;
  align-items: center;
}

.WinCtrl {
  position: absolute;
  left: 1672px;
  top: 10px;
  display: flex;
  align-items: center;
  gap: 14px;
}

.Ghost {
  position: absolute;
  left: 1702px;
  top: 58px;
  width: 68px;
}

.Ghost__x {
  display: block;
  margin: -8px 0 0 42px;
}

.TaskPane {
  position: absolute;
  right: 0;
  top: 52px;
  width: 25px;
}

.TaskPane__btn {
  display: flex;
  align-items: center;
  justify-content: center;
  box-sizing: border-box;
  height: 24px;
  background: #d6d6d6;
  border: 1px solid #b0b0b0;
  border-top-color: #999;
}

.TaskPane__btn--active {
  background: #f2f2f2;
}

.Popup {
  position: absolute;
  left: 438px;
  top: 135px;
  box-sizing: border-box;
  width: 142px;
  height: 70px;
  background: #f6f6f6;
  border: 1px solid #777;
}

.Popup__bar {
  height: 10px;
  background: #84848f;
}

.Popup__row {
  display: flex;
  align-items: center;
  gap: 4px;
  height: 24px;
  padding: 4px 0 0 3px;
}

.Popup__row--top {
  padding-top: 2px;
}

.Popup__check {
  margin-left: 7px;
}

.Popup__row--top .Popup__btn {
  margin-left: 3px;
}

.Popup__ghost {
  margin-left: 33px;
}

.Popup__pin {
  margin-left: 8px;
}

.Popup__btn {
  display: flex;
  align-items: center;
  justify-content: center;
  box-sizing: border-box;
  width: 24px;
  height: 24px;
  background: #f6f6f6;
  border: 1px solid #a8a8a8;
}

.Popup__btn--on {
  background: #a8a8a8;
  border-color: #7a7a7a;
}

.Callout {
  position: absolute;
  left: 493px;
  top: 354px;
  display: flex;
  align-items: center;
  justify-content: center;
  box-sizing: border-box;
  width: 46px;
  height: 25px;
  background: #f6f6f6;
  border: 1px solid #222;
  font-size: 10.5px;
}

.Marker {
  position: absolute;
  display: flex;
  align-items: center;
  justify-content: center;
  width: 40px;
  height: 40px;
  border-radius: 50%;
  background: #ff4040;
  box-shadow: 0 3px 6px rgba(0, 0, 0, 0.4);
  color: #fff;
  font-family: "Liberation Sans", Arial, sans-serif;
  font-size: 27px;
}
</style>
